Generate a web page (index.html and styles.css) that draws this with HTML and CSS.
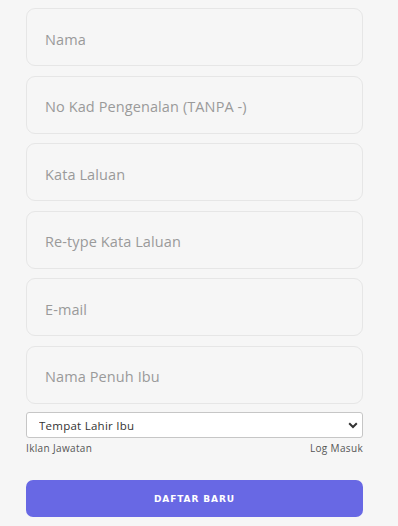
FILE: index.html
```html
<!DOCTYPE html>
<html>
<head>
    <meta charset="UTF-8">
    <title>Daftar Baru</title>
    <link rel="stylesheet" href="styles.css">
</head>
<body>
    <form class="register-form">
        <input type="text" class="form-input" placeholder="Nama">
        <input type="text" class="form-input" placeholder="No Kad Pengenalan (TANPA -)">
        <input type="password" class="form-input" placeholder="Kata Laluan">
        <input type="password" class="form-input" placeholder="Re-type Kata Laluan">
        <input type="email" class="form-input" placeholder="E-mail">
        <input type="text" class="form-input" placeholder="Nama Penuh Ibu">

        <div class="select-wrap">
            <select class="form-select">
                <option>Tempat Lahir Ibu</option>
            </select>
            <svg class="select-arrow" width="10" height="7" viewBox="0 0 10 7">
                <path d="M1.2 1.3 L5 5 L8.8 1.3" fill="none" stroke="#333" stroke-width="2"/>
            </svg>
        </div>

        <div class="links">
            <a href="#">Iklan Jawatan</a>
            <a href="#">Log Masuk</a>
        </div>

        <button type="button" class="submit-btn">DAFTAR BARU</button>
    </form>
</body>
</html>
```

FILE: styles.css
```css
:root {
    --page-bg: #f6f6f6;
    --border-color: #e6e6e6;
    --placeholder: #9a9a9a;
    --primary-color: #6868e4;
    --text-color: #444;
}

* {
    box-sizing: border-box;
    margin: 0;
    padding: 0;
}

body {
    background: var(--page-bg);
    font-family: 'Open Sans', sans-serif;
    color: var(--text-color);
}

.register-form {
    width: 337px;
    margin-left: 26px;
    padding-top: 8px;
    display: flex;
    flex-direction: column;
}

.form-input {
    height: 58px;
    margin-bottom: 9.6px;
    padding: 4px 18px 0;
    border: 1px solid var(--border-color);
    border-radius: 9px;
    background: var(--page-bg);
    font-family: inherit;
    font-size: 14.5px;
    color: var(--text-color);
    outline: none;
}

.form-input::placeholder {
    color: var(--placeholder);
    letter-spacing: 0.1px;
}

.select-wrap {
    position: relative;
    margin-top: -1.5px;
}

.form-select {
    width: 100%;
    height: 26px;
    padding: 0 12px;
    border: 1px solid #c6c6c6;
    border-radius: 3px;
    background: #fff;
    font-family: 'Open Sans', sans-serif;
    font-size: 11.5px;
    font-weight: 500;
    letter-spacing: 0.25px;
    color: #333;
    appearance: none;
    -webkit-appearance: none;
    outline: none;
}

.select-arrow {
    position: absolute;
    right: 5px;
    top: 10px;
    pointer-events: none;
}

.links {
    display: flex;
    justify-content: space-between;
    margin-top: 3px;
}

.links a {
    font-family: 'Open Sans', sans-serif;
    font-size: 10px;
    color: #555;
    text-decoration: none;
    letter-spacing: 0.35px;
}

.submit-btn {
    margin-top: 25px;
    height: 37px;
    border: none;
    border-radius: 7px;
    background: var(--primary-color);
    color: #fff;
    font-family: 'DejaVu Sans', sans-serif;
    font-size: 9px;
    font-weight: bold;
    letter-spacing: 0.9px;
    cursor: pointer;
}
```
